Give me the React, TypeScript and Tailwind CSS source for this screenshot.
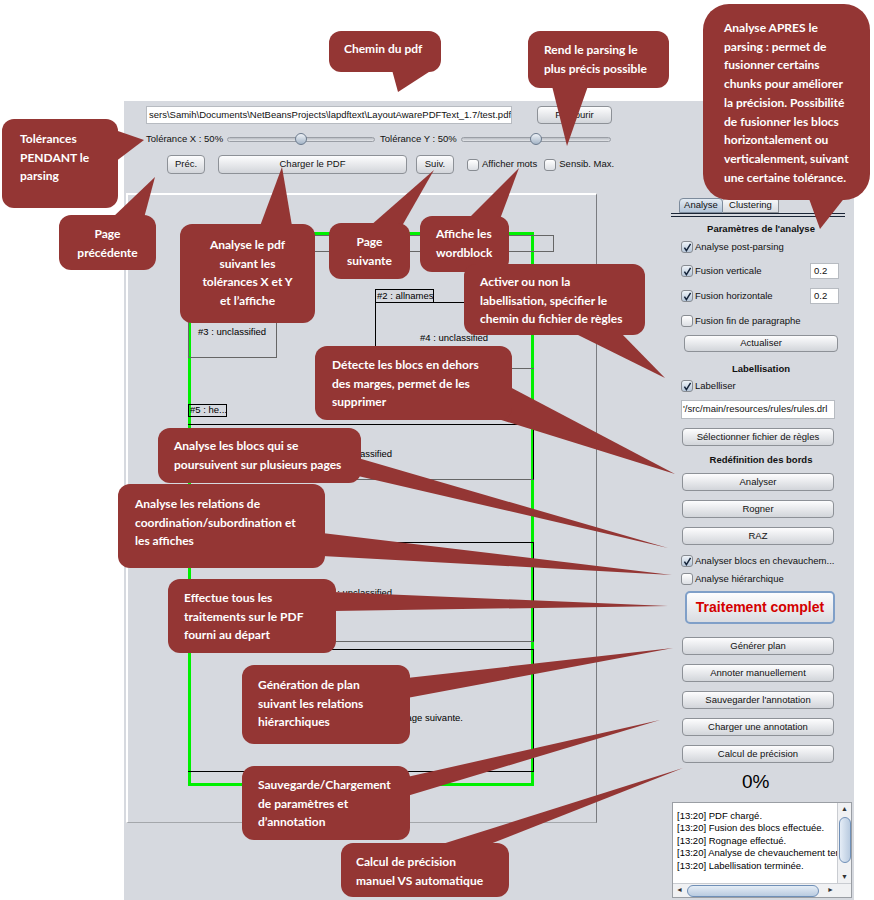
import React from 'react'

function Btn({ className, children }: { className: string; children: React.ReactNode }) {
  return (
    <div
      className={`flex items-center justify-center rounded-[4px] border border-[#8d9197] bg-gradient-to-b from-[#fdfdfe] to-[#d2d5da] text-[9.5px] text-[#111] shrink-0 ${className}`}
    >
      {children}
    </div>
  )
}

function Check({ on }: { on?: boolean }) {
  return (
    <span
      className={`w-[12px] h-[12px] shrink-0 rounded-[3px] border border-[#888c92] flex items-center justify-center ${
        on ? 'bg-gradient-to-b from-[#eef3f8] to-[#b7c7d9]' : 'bg-gradient-to-b from-[#ffffff] to-[#dcdfe4]'
      }`}
    >
      {on && (
        <svg width="9" height="9" viewBox="0 0 9 9">
          <path d="M1.4 4.6 L3.4 7.6 L7.6 0.8" stroke="#15243a" strokeWidth="1.5" fill="none" />
        </svg>
      )}
    </span>
  )
}

function Slider() {
  return (
    <div className="relative h-[16px] flex items-center">
      <div className="w-full h-[5px] rounded-full border border-[#9a9ea5] bg-gradient-to-b from-[#b9bdc4] to-[#e3e5e9]" />
      <div className="absolute left-1/2 -translate-x-1/2 w-[12px] h-[12px] rounded-full border border-[#6c7b8e] bg-gradient-to-b from-[#eef2f7] to-[#a5b5c7]" />
    </div>
  )
}

function Callout({ className, center, lines }: { className: string; center?: boolean; lines: string[] }) {
  return (
    <div
      className={`absolute bg-[#943634] rounded-[12px] text-white font-bold text-[12px] leading-[18.7px] whitespace-nowrap ${
        center ? 'text-center' : 'text-left'
      } ${className}`}
      style={{ fontFamily: 'Lato, "Open Sans", sans-serif' }}
    >
      {lines.map((l, i) => (
        <div key={i}>{l}</div>
      ))}
    </div>
  )
}

const tails: number[][] = [
  [392, 70, 432, 70, 398, 92],
  [552, 86, 588, 86, 567, 146],
  [808, 196, 846, 196, 820, 229],
  [115, 130, 115, 162, 144, 140],
  [112, 218, 144, 218, 155, 177],
  [260, 226, 292, 226, 282, 167],
  [370, 226, 402, 226, 434, 170],
  [468, 219, 500, 219, 519, 168],
  [572, 332, 620, 332, 665, 378],
  [508, 386, 495, 418, 675, 474],
  [358, 458, 358, 476, 668, 548],
  [322, 533, 322, 556, 672, 575],
  [333, 592, 333, 611, 668, 606],
  [407, 678, 407, 698, 673, 648],
  [407, 777, 407, 796, 660, 720],
  [436, 846, 485, 846, 683, 768],
]

const logLines = [
  '[13:20] PDF chargé.',
  '[13:20] Fusion des blocs effectuée.',
  '[13:20] Rognage effectué.',
  '[13:20] Analyse de chevauchement terminée.',
  '[13:20] Labellisation terminée.',
]

export default function App() {
  return (
    <div
      className="relative w-[874px] h-[900px] overflow-hidden bg-white flex flex-col"
      style={{ fontFamily: '"Liberation Sans", Arial, sans-serif' }}
    >
      {/* application window */}
      <div className="ml-[124px] mt-[101px] w-[730px] h-[799px] bg-[#d6d9df] flex flex-col text-[#111]">
        {/* path row */}
        <div className="mt-[5px] pl-[22px] flex items-center h-[18px]">
          <div className="w-[366px] h-[18px] bg-white border border-[#b7bbc1] flex items-center px-[2px] text-[9.5px] overflow-hidden whitespace-nowrap">
            sers\Samih\Documents\NetBeansProjects\lapdftext\LayoutAwarePDFText_1.7/test.pdf
          </div>
          <Btn className="ml-[25px] w-[75px] h-[18px]">Parcourir</Btn>
        </div>

        {/* tolerance row */}
        <div className="mt-[7px] pl-[22px] flex items-center h-[16px] text-[9.5px]">
          <span className="w-[81px] whitespace-nowrap">Tolérance X : 50%</span>
          <div className="w-[148px]">
            <Slider />
          </div>
          <span className="ml-[5px] w-[81px] whitespace-nowrap">Tolérance Y : 50%</span>
          <div className="w-[150px]">
            <Slider />
          </div>
        </div>

        {/* navigation row */}
        <div className="mt-[8px] pl-[43px] flex items-center h-[19px] text-[9.5px]">
          <Btn className="w-[38px] h-[19px]">Préc.</Btn>
          <Btn className="ml-[13px] w-[189px] h-[19px]">Charger le PDF</Btn>
          <Btn className="ml-[9px] w-[38px] h-[19px]">Suiv.</Btn>
          <span className="ml-[13px]">
            <Check />
          </span>
          <span className="ml-[3px] whitespace-nowrap">Afficher mots</span>
          <span className="ml-[7px]">
            <Check />
          </span>
          <span className="ml-[3px] whitespace-nowrap">Sensib. Max.</span>
        </div>

        {/* body */}
        <div className="mt-[19px] flex">
          {/* pdf viewer */}
          <div className="ml-[2px] w-[471px] h-[630px] border-t-2 border-l-2 border-white border-r border-b border-r-[#7a7c80] border-b-[#a4a7ab] relative text-[9.5px] text-black">
            <div className="absolute left-[60px] top-[37px] w-[346px] h-[554px] border-[3px] border-[#00f000]" />
            <div className="absolute left-[62px] top-[40px] w-[364px] h-[17px] border border-[#666]" />
            <div className="absolute left-[247px] top-[94px] w-[59px] h-[14px] border border-black flex items-center pl-[1px] whitespace-nowrap">
              #2 : allnames
            </div>
            <div className="absolute left-[247px] top-[107px] w-[159px] h-[67px] border-l border-t border-black border-b border-b-[#666]" />
            <div className="absolute left-[292px] top-[136px] whitespace-nowrap">#4 : unclassified</div>
            <div className="absolute left-[60px] top-[112px] w-[89px] h-[51px] border border-[#666]" />
            <div className="absolute left-[70px] top-[130px] whitespace-nowrap">#3 : unclassified</div>
            <div className="absolute left-[60px] top-[209px] w-[39px] h-[13px] border border-black flex items-center pl-[1px] whitespace-nowrap">
              #5 : he...
            </div>
            <div className="absolute left-[60px] top-[229px] w-[346px] h-[56px] border-t border-black border-b border-b-[#666] border-r border-r-black" />
            <div className="absolute left-[196px] top-[252px] whitespace-nowrap">#6 : unclassified</div>
            <div className="absolute left-[60px] top-[347px] w-[346px] h-[100px] border-t border-black border-b border-b-[#666] border-r border-r-black" />
            <div className="absolute left-[196px] top-[391px] whitespace-nowrap">#7 : unclassified</div>
            <div className="absolute left-[60px] top-[454px] w-[346px] h-[123px] border-t border-b border-r border-black" />
            <div className="absolute right-[133px] top-[516px] whitespace-nowrap">Suite sur la page suivante.</div>
          </div>

          {/* right panel */}
          <div className="ml-[73px] w-[182px] flex flex-col text-[9.5px]">
            <div className="mt-[5px] pl-[9px] flex h-[15px]">
              <div className="w-[44px] h-[15px] flex items-center justify-center rounded-t-[4px] border border-[#7d8b9c] bg-gradient-to-b from-[#e3ebf3] to-[#b3c5d9]">
                Analyse
              </div>
              <div className="w-[56px] h-[15px] flex items-center justify-center rounded-t-[3px] border border-l-0 border-[#8d9197] bg-gradient-to-b from-[#f7f8fa] to-[#d8dbe0]">
                Clustering
              </div>
            </div>
            <div className="ml-[1px] w-[174px] h-[4px] border-t border-b border-[#1a2536]" />

            <div className="mt-[5px] h-[14px] flex items-center justify-center font-bold">Paramètres de l'analyse</div>

            <div className="mt-[4px] h-[14px] pl-[11px] flex items-center gap-[2px]">
              <Check on />
              <span>Analyse post-parsing</span>
            </div>
            <div className="mt-[9px] h-[16px] pl-[11px] flex items-center gap-[2px]">
              <Check on />
              <span>Fusion verticale</span>
              <div className="ml-auto mr-[13px] w-[29px] h-[16px] bg-white border border-[#b7bbc1] flex items-center pl-[3px]">0.2</div>
            </div>
            <div className="mt-[9px] h-[16px] pl-[11px] flex items-center gap-[2px]">
              <Check on />
              <span>Fusion horizontale</span>
              <div className="ml-auto mr-[13px] w-[29px] h-[16px] bg-white border border-[#b7bbc1] flex items-center pl-[3px]">0.2</div>
            </div>
            <div className="mt-[10px] h-[14px] pl-[11px] flex items-center gap-[2px]">
              <Check />
              <span>Fusion fin de paragraphe</span>
            </div>
            <Btn className="mt-[7px] ml-[14px] w-[154px] h-[17px]">Actualiser</Btn>

            <div className="mt-[10px] h-[14px] flex items-center justify-center font-bold">Labellisation</div>
            <div className="mt-[3px] h-[14px] pl-[11px] flex items-center gap-[2px]">
              <Check on />
              <span>Labelliser</span>
            </div>
            <div className="mt-[7px] ml-[11px] w-[154px] h-[19px] bg-white border border-[#b7bbc1] flex items-center pl-[1px] whitespace-nowrap overflow-hidden">
              '/src/main/resources/rules/rules.drl
            </div>
            <Btn className="mt-[9px] ml-[12px] w-[152px] h-[18px]">Sélectionner fichier de règles</Btn>

            <div className="mt-[7px] h-[14px] flex items-center justify-center font-bold">Redéfinition des bords</div>
            <Btn className="mt-[6px] ml-[12px] w-[152px] h-[18px]">Analyser</Btn>
            <Btn className="mt-[9px] ml-[12px] w-[152px] h-[18px]">Rogner</Btn>
            <Btn className="mt-[9px] ml-[12px] w-[152px] h-[18px]">RAZ</Btn>

            <div className="mt-[9px] h-[14px] pl-[11px] flex items-center gap-[2px] whitespace-nowrap">
              <Check on />
              <span>Analyser blocs en chevauchem...</span>
            </div>
            <div className="mt-[4px] h-[14px] pl-[11px] flex items-center gap-[2px]">
              <Check />
              <span>Analyse hiérarchique</span>
            </div>

            <div className="mt-[5px] ml-[15px] w-[150px] h-[33px] rounded-[5px] border-2 border-[#7f9fc8] bg-gradient-to-b from-[#fdfdfe] to-[#d9dce1] flex items-center justify-center text-[14px] font-bold text-[#d40000]">
              Traitement complet
            </div>

            <Btn className="mt-[13px] ml-[12px] w-[152px] h-[18px]">Générer plan</Btn>
            <Btn className="mt-[9px] ml-[12px] w-[152px] h-[18px]">Annoter manuellement</Btn>
            <Btn className="mt-[9px] ml-[12px] w-[152px] h-[18px]">Sauvegarder l'annotation</Btn>
            <Btn className="mt-[9px] ml-[12px] w-[152px] h-[18px]">Charger une annotation</Btn>
            <Btn className="mt-[9px] ml-[12px] w-[152px] h-[18px]">Calcul de précision</Btn>

            <div className="mt-[8px] ml-[72px] h-[22px] flex items-center text-[19px] text-black">0%</div>

            {/* log */}
            <div className="mt-[9px] ml-[2px] w-[180px] h-[96px] bg-white border border-[#9a9ea4] flex flex-col">
              <div className="flex flex-1 min-h-0">
                <div className="flex-1 overflow-hidden pl-[4px] pt-[7px] text-[9.5px] leading-[12.4px] text-black whitespace-nowrap">
                  {logLines.map(l => (
                    <div key={l}>{l}</div>
                  ))}
                </div>
                <div className="w-[14px] flex flex-col items-center bg-[#f0f1f3] border-l border-[#c9ccd1]">
                  <span className="text-[7px] leading-[10px] text-[#333] mt-[1px]">▲</span>
                  <div className="mt-[3px] w-[12px] h-[46px] rounded-full border border-[#6f8fb7] bg-gradient-to-r from-[#e5edf6] to-[#b9cbe0]" />
                  <span className="mt-auto text-[7px] leading-[10px] text-[#333] mb-[1px]">▼</span>
                </div>
              </div>
              <div className="h-[14px] flex items-center bg-[#f0f1f3] border-t border-[#c9ccd1]">
                <span className="ml-[3px] text-[7px] text-[#333]">◄</span>
                <div className="ml-[4px] w-[132px] h-[12px] rounded-full border border-[#6f8fb7] bg-gradient-to-b from-[#e5edf6] to-[#b9cbe0]" />
                <span className="ml-auto mr-[17px] text-[7px] text-[#333]">►</span>
              </div>
            </div>
          </div>
        </div>
      </div>

      {/* annotation tails */}
      <svg className="absolute left-0 top-0 pointer-events-none" width="874" height="900" viewBox="0 0 874 900">
        {tails.map((t, i) => (
          <polygon key={i} points={`${t[0]},${t[1]} ${t[2]},${t[3]} ${t[4]},${t[5]}`} fill="#943634" />
        ))}
      </svg>

      {/* annotation callouts */}
      <Callout className="left-[329px] top-[31px] w-[112px] h-[41px] pt-[9px] pl-[15px]" lines={['Chemin du pdf']} />
      <Callout
        className="left-[528px] top-[31px] w-[141px] h-[57px] pt-[10px] pl-[16px]"
        lines={['Rend le parsing le', 'plus précis possible']}
      />
      <Callout
        className="left-[703px] top-[4px] w-[167px] h-[196px] pt-[15px] pl-[21px] rounded-[26px]"
        lines={[
          'Analyse APRES le',
          'parsing : permet de',
          'fusionner certains',
          'chunks pour améliorer',
          'la précision. Possibilité',
          'de fusionner les blocs',
          'horizontalement ou',
          'verticalenment, suivant',
          'une certaine tolérance.',
        ]}
      />
      <Callout
        className="left-[2px] top-[119px] w-[116px] h-[89px] pt-[11px] pl-[18px]"
        lines={['Tolérances', 'PENDANT le', 'parsing']}
      />
      <Callout className="left-[59px] top-[215px] w-[97px] h-[55px] pt-[10px]" center lines={['Page', 'précédente']} />
      <Callout
        className="left-[180px] top-[224px] w-[135px] h-[99px] pt-[12px]"
        center
        lines={['Analyse le pdf', 'suivant les', 'tolérances X et Y', 'et l’affiche']}
      />
      <Callout className="left-[329px] top-[223px] w-[81px] h-[56px] pt-[10px]" center lines={['Page', 'suivante']} />
      <Callout
        className="left-[420px] top-[216px] w-[89px] h-[56px] pt-[9px] pl-[16px]"
        lines={['Affiche les', 'wordblock']}
      />
      <Callout
        className="left-[464px] top-[264px] w-[181px] h-[71px] pt-[9px] pl-[16px]"
        lines={['Activer ou non la', 'labellisation, spécifier le', 'chemin du fichier de règles']}
      />
      <Callout
        className="left-[315px] top-[346px] w-[197px] h-[74px] pt-[10px] pl-[17px]"
        lines={['Détecte les blocs en dehors', 'des marges, permet de les', 'supprimer']}
      />
      <Callout
        className="left-[158px] top-[428px] w-[203px] h-[55px] pt-[9px] pl-[16px]"
        lines={['Analyse les blocs qui se', 'poursuivent sur plusieurs pages']}
      />
      <Callout
        className="left-[118px] top-[484px] w-[207px] h-[84px] pt-[11px] pl-[17px]"
        lines={['Analyse les relations de', 'coordination/subordination et', 'les affiches']}
      />
      <Callout
        className="left-[168px] top-[579px] w-[168px] h-[74px] pt-[10px] pl-[16px]"
        lines={['Effectue tous les', 'traitements sur le PDF', 'fourni au départ']}
      />
      <Callout
        className="left-[242px] top-[665px] w-[168px] h-[79px] pt-[11px] pl-[16px]"
        lines={['Génération de plan', 'suivant les relations', 'hiérarchiques']}
      />
      <Callout
        className="left-[242px] top-[766px] w-[168px] h-[74px] pt-[10px] pl-[16px]"
        lines={['Sauvegarde/Chargement', 'de paramètres et', 'd’annotation']}
      />
      <Callout
        className="left-[341px] top-[843px] w-[168px] h-[54px] pt-[10px] pl-[15px]"
        lines={['Calcul de précision', 'manuel VS automatique']}
      />
    </div>
  )
}
